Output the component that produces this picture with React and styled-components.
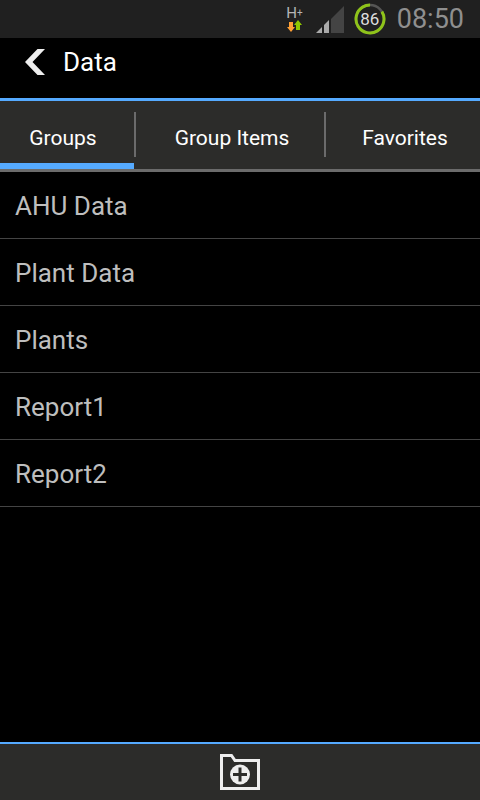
import React, { useState } from "react";
import styled, { createGlobalStyle } from "styled-components";

const tabs = ["Groups", "Group Items", "Favorites"];

const groups = ["AHU Data", "Plant Data", "Plants", "Report1", "Report2"];

const StatusBar = () => {
    return (
        <Status>
            <Network>
                <NetworkType>H<sup>+</sup></NetworkType>
                <svg width="16" height="12" viewBox="0 0 16 12" aria-hidden="true">
                    <path d="M3 2h4v5h2L5 12 1 7h2z" fill="#ffa035" />
                    <path d="M10 10h4V5h2L12 0 8 5h2z" fill="#8fc800" />
                </svg>
            </Network>
            <Signal width="28" height="27" viewBox="0 0 28 27" aria-hidden="true">
                <path d="M0 27 6 21V27z" fill="#aaa" />
                <path d="M8 27V19L13 14V27z" fill="#aaa" />
                <path d="M15 27V13L28 0V27z" fill="#444" />
            </Signal>
            <Battery>
                <svg width="32" height="32" viewBox="0 0 32 32" aria-hidden="true">
                    <circle cx="16" cy="16" r="14" fill="none" stroke="#555" strokeWidth="2.500" />
                    <circle
                        cx="16" cy="16" r="14" fill="none" stroke="#8fc31a" strokeWidth="3"
                        pathLength="100" strokeDasharray="84 16" transform="rotate(-32 16 16)"
                    />
                </svg>
                <BatteryLevel>86</BatteryLevel>
            </Battery>
            <Clock>08:50</Clock>
        </Status>
    )
}

const App = () => {
    const [active, setActive] = useState("Groups");

    return (
        <Screen>
            <GlobalStyle />
            <StatusBar />
            <Header>
                <IconButton aria-label="Back">
                    <svg width="20" height="26" viewBox="0 0 20 26" aria-hidden="true">
                        <path d="M0 13 12.500 0H20L7.500 13 20 26H12.500z" fill="#eee" />
                    </svg>
                </IconButton>
                <Title>Data</Title>
            </Header>
            <TabBar>
                {tabs.map((tab) => (
                    <Tab key={tab} $active={tab === active} onClick={() => setActive(tab)}>
                        {tab}
                    </Tab>
                ))}
            </TabBar>
            <List>
                {groups.map((group) => (
                    <Row key={group}>{group}</Row>
                ))}
            </List>
            <BottomBar>
                <IconButton aria-label="Add group">
                    <svg width="40" height="36" viewBox="0 0 40 36" aria-hidden="true">
                        <path d="M1.500 1.500H11.500L15 6.500H38.500V34.500H1.500z" fill="none" stroke="#eee" strokeWidth="3" />
                        <circle cx="20" cy="20.500" r="10" fill="#eee" />
                        <path d="M20 13.500v14M13 20.500h14" stroke="#2c2c2a" strokeWidth="3" />
                    </svg>
                </IconButton>
            </BottomBar>
        </Screen>
    )
}

const GlobalStyle = createGlobalStyle`
  * {
    box-sizing: border-box;
  }
  body {
    margin: 0;
    background: #000;
    font-family: Roboto, "Liberation Sans", sans-serif;
  }
`;

const Screen = styled.div`
  display: flex;
  flex-direction: column;
  min-height: 100vh;
  background: #000;
`;

const Status = styled.div`
  display: flex;
  align-items: center;
  justify-content: flex-end;
  height: 38px;
  padding-right: 16px;
  background: #202020;
`;

const Network = styled.div`
  display: flex;
  flex-direction: column;
`;

const NetworkType = styled.span`
  color: #b4b4b4;
  font-size: 15px;
  line-height: 14px;

  & > sup {
    font-size: 10px;
    line-height: 1;
    vertical-align: 2px;
  }
`;

const Signal = styled.svg`
  margin: 0 10px 0 13px;
`;

const Battery = styled.div`
  display: grid;
  place-items: center;

  & > * {
    grid-area: 1 / 1;
  }
`;

const BatteryLevel = styled.span`
  color: #ddd;
  font-size: 17px;
  line-height: 20px;
`;

const Clock = styled.span`
  margin-left: 11px;
  color: #8f8f8f;
  font-size: 27px;
  line-height: 38px;
`;

const Header = styled.header`
  display: flex;
  align-items: center;
  height: 63px;
  padding: 0 25px 12px;
  border-bottom: 3px solid #55aaff;
`;

const IconButton = styled.button`
  display: flex;
  padding: 0;
  border: 0;
  background: none;
  cursor: pointer;
`;

const Title = styled.h1`
  margin: 0 0 0 18px;
  color: #fff;
  font-size: 26px;
  font-weight: 400;
  line-height: 32px;
`;

const TabBar = styled.nav`
  display: grid;
  grid-template-columns: 134fr 190fr 156fr;
  height: 71px;
  background: #2c2c2a;
  border-bottom: 3px solid #6b6b6b;
`;

const Tab = styled.button`
  padding: 12px 0 0 6px;
  border: 0;
  border-bottom: 6px solid ${(props) => (props.$active ? "#55aaff" : "transparent")};
  background: linear-gradient(#6b6b6b, #6b6b6b) 0 11px / 2px 45px no-repeat;
  color: #fff;
  font-family: inherit;
  font-size: 21px;
  line-height: 28px;
  white-space: nowrap;
  cursor: pointer;

  &:first-child {
    padding: 12px 8px 0 0;
    background: none;
  }
`;

const List = styled.ul`
  flex: 1;
  margin: 0;
  padding: 0;
  list-style: none;
`;

const Row = styled.li`
  padding: 18px 15px 16px;
  border-bottom: 1px solid #444;
  color: #bebebe;
  font-size: 26px;
  line-height: 32px;
`;

const BottomBar = styled.footer`
  display: flex;
  align-items: center;
  justify-content: center;
  height: 58px;
  background: #2c2c2a;
  border-top: 2px solid #55aaff;
`;

export default App;
